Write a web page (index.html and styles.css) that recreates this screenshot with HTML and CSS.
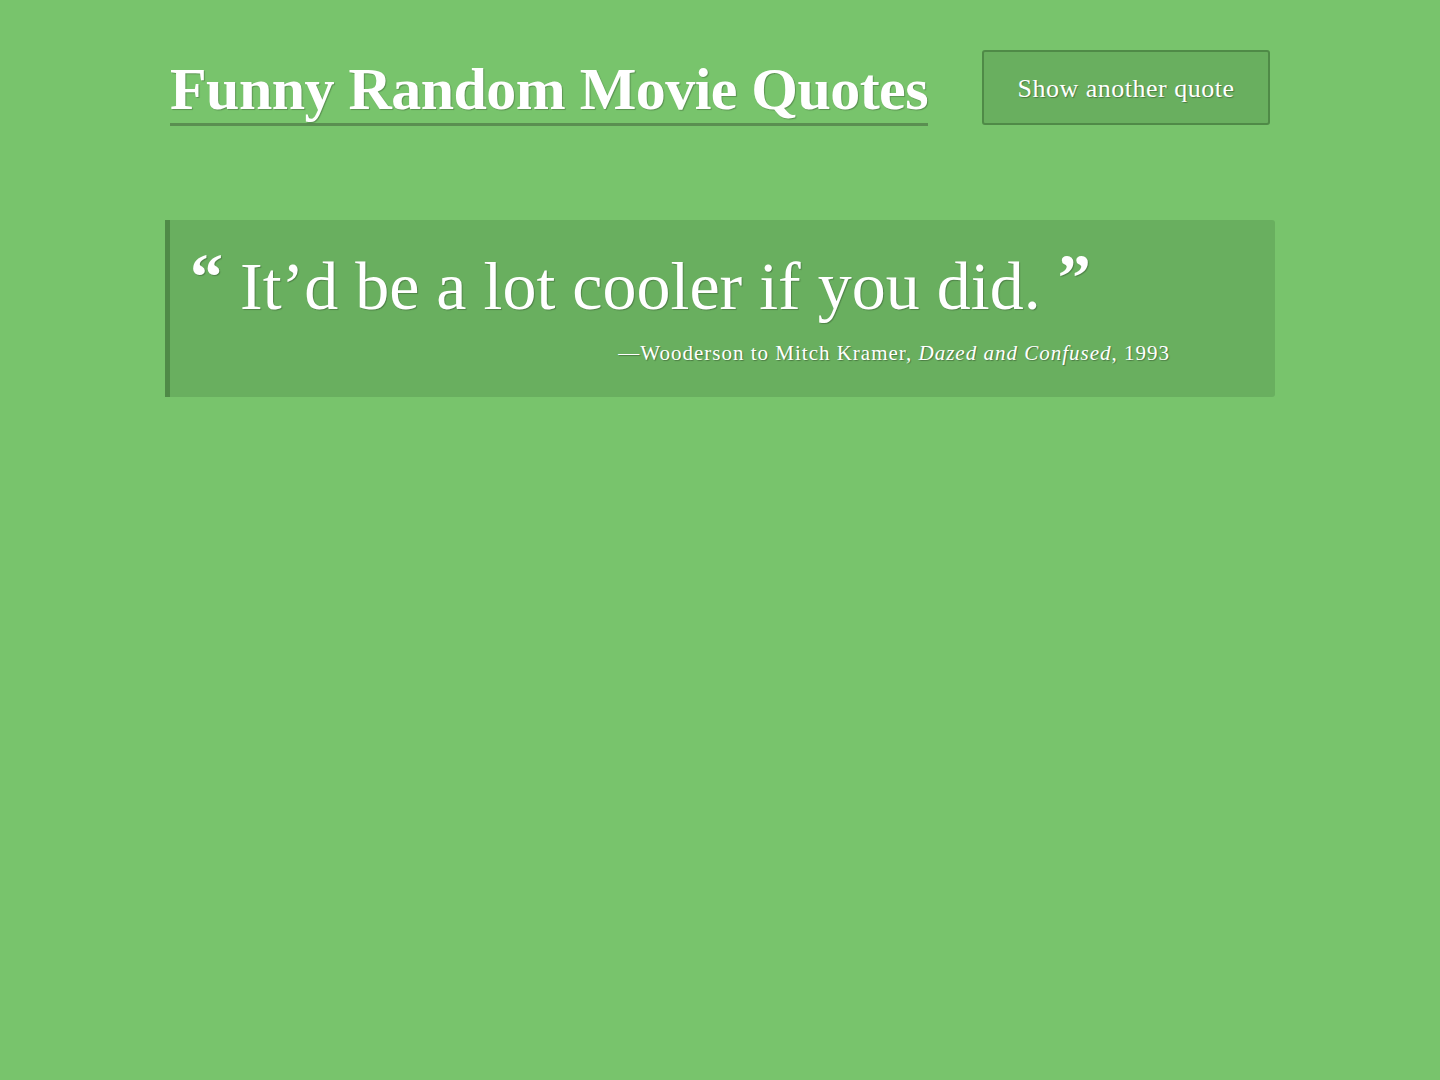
FILE: index.html
```html
<!DOCTYPE html>
<html lang="en">
<head>
<meta charset="utf-8">
<title>Funny Random Movie Quotes</title>
<link rel="stylesheet" href="styles.css">
</head>
<body>
<div class="page">
  <header class="header">
    <h1 class="title">Funny Random Movie Quotes</h1>
    <button class="btn" type="button">Show another quote</button>
  </header>
  <blockquote class="quote">
    <p class="quote-text"><span class="mark">“</span> It’d be a lot cooler if you did. <span class="mark">”</span></p>
    <p class="cite">—Wooderson to Mitch Kramer, <em>Dazed and Confused</em>, 1993</p>
  </blockquote>
</div>
</body>
</html>
```
FILE: styles.css
```css
html, body {
  margin: 0;
  padding: 0;
  background: #78c46c;
  min-height: 100%;
}
body {
  font-family: "Liberation Serif", "DejaVu Serif", serif;
  color: #fff;
  height: 1080px;
}
.page {
  width: 1110px;
  margin: 0 auto;
  padding-top: 50px;
}
.header {
  display: flex;
  justify-content: space-between;
  align-items: flex-start;
  padding: 0 5px 0 5px;
}
.title {
  margin: 0;
  font-size: 60px;
  font-weight: 700;
  line-height: 68px;
  padding-top: 5px;
  padding-bottom: 0;
  border-bottom: 3px solid #5a8f51;
  text-shadow: 1px 1px 1px rgba(0,0,0,0.25);
  letter-spacing: -0.55px;
}
.btn {
  width: 288px;
  height: 75px;
  background: #69af5f;
  border: 2px solid #4f8a47;
  border-radius: 3px;
  color: #fff;
  font-family: "Liberation Serif", "DejaVu Serif", serif;
  font-size: 26px;
  letter-spacing: 0.5px;
  text-shadow: 1px 1px 1px rgba(0,0,0,0.3);
  padding: 3px 0 0 0;
  margin-right: 0;
}
.quote {
  margin: 94px 0 0 0;
  background: #69af5f;
  border-left: 5px solid #4f8a47;
  border-radius: 0 3px 3px 0;
  padding: 17px 20px 0 20px;
  height: 160px;
}
.quote-text {
  margin: 0;
  font-size: 68px;
  line-height: 80px;
  text-shadow: 1px 1px 1px rgba(0,0,0,0.25);
}
.mark {
  font-weight: 700;
  font-size: 66px;
  vertical-align: 10px;
}
.cite {
  margin: 15px 0 0 0;
  text-align: right;
  padding-right: 85px;
  font-size: 21px;
  letter-spacing: 1px;
  text-shadow: 1px 1px 1px rgba(0,0,0,0.3);
}
.cite em {
  font-style: italic;
}
```
